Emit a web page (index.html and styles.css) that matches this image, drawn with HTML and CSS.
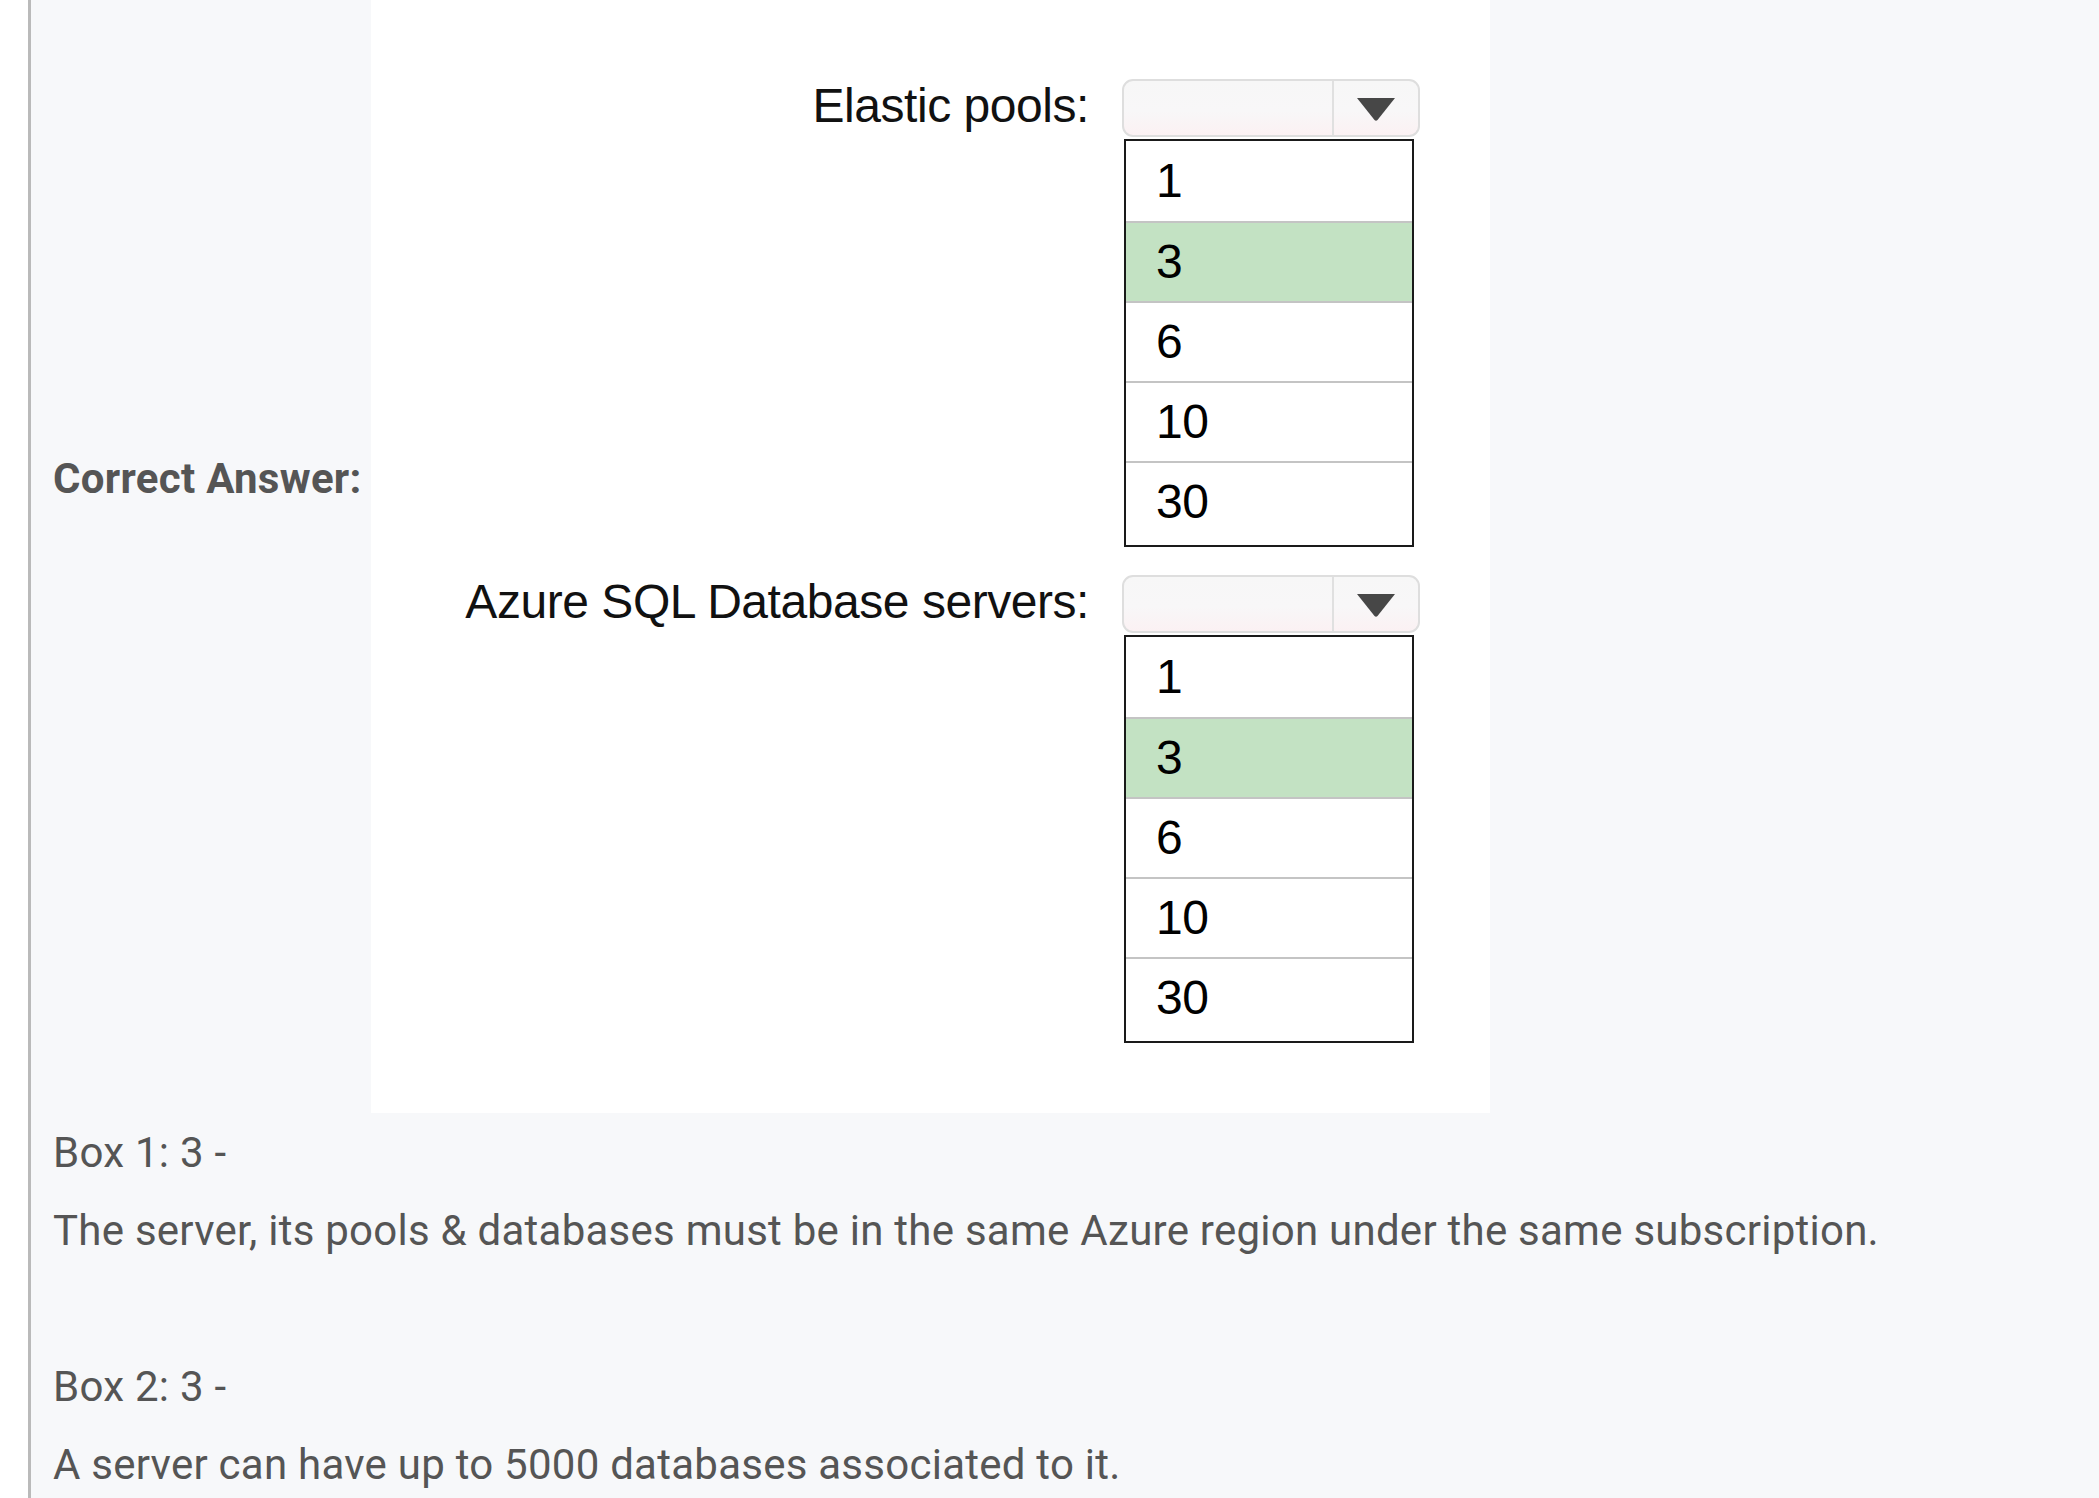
FILE: index.html
```html
<!DOCTYPE html>
<html lang="en">
<head>
<meta charset="utf-8">
<title>Correct Answer</title>
<link rel="stylesheet" href="styles.css">
</head>
<body>
<div class="page">
  <div class="answer-row">
    <div class="answer-label">Correct Answer:</div>
    <div class="panel">
      <div class="group">
        <div class="field-label">Elastic pools:</div>
        <div class="control">
          <div class="dropdown">
            <div class="dd-field"></div>
            <div class="dd-btn">
              <svg class="arrow" width="40" height="24" viewBox="0 0 40 24"><path d="M1 1 H39 L21.5 23 Q20 24.5 18.5 23 Z" fill="#474747"/></svg>
            </div>
          </div>
          <div class="list">
            <div class="opt">1</div>
            <div class="opt selected">3</div>
            <div class="opt">6</div>
            <div class="opt">10</div>
            <div class="opt">30</div>
          </div>
        </div>
      </div>
      <div class="group">
        <div class="field-label">Azure SQL Database servers:</div>
        <div class="control">
          <div class="dropdown">
            <div class="dd-field"></div>
            <div class="dd-btn">
              <svg class="arrow" width="40" height="24" viewBox="0 0 40 24"><path d="M1 1 H39 L21.5 23 Q20 24.5 18.5 23 Z" fill="#474747"/></svg>
            </div>
          </div>
          <div class="list">
            <div class="opt">1</div>
            <div class="opt selected">3</div>
            <div class="opt">6</div>
            <div class="opt">10</div>
            <div class="opt">30</div>
          </div>
        </div>
      </div>
    </div>
  </div>
  <div class="explanation">
    <p>Box 1: 3 -</p>
    <p>The server, its pools &amp; databases must be in the same Azure region under the same subscription.</p>
    <p class="blank">&nbsp;</p>
    <p>Box 2: 3 -</p>
    <p>A server can have up to 5000 databases associated to it.</p>
  </div>
</div>
</body>
</html>
```
FILE: styles.css
```css
html, body {
  margin: 0;
  padding: 0;
  background: #ffffff;
}

.page {
  margin-left: 28px;
  border-left: 3px solid #bababa;
  background: #f7f8fa;
  padding-left: 22px;
  min-height: 100vh;
  box-sizing: border-box;
  font-family: Roboto, "Liberation Sans", sans-serif;
  color: #555555;
  overflow: hidden;
}

.answer-row {
  display: flex;
  align-items: flex-start;
}

.answer-label {
  flex: none;
  width: 318px;
  margin-top: 440px;
  font-weight: 700;
  font-size: 42px;
  line-height: 78px;
  letter-spacing: 0.3px;
  white-space: nowrap;
}

.panel {
  flex: none;
  width: 1119px;
  background: #ffffff;
  padding: 79px 0 70px;
  display: flex;
  flex-direction: column;
  gap: 28px;
}

.group {
  display: flex;
  align-items: flex-start;
  gap: 33px;
}

.field-label {
  flex: none;
  width: 718px;
  text-align: right;
  font-family: "Liberation Sans", Arial, sans-serif;
  font-size: 48px;
  line-height: 53px;
  letter-spacing: -0.45px;
  color: #111111;
  white-space: nowrap;
}

.control {
  flex: none;
  width: 298px;
}

.dropdown {
  height: 58px;
  box-sizing: border-box;
  border: 2px solid #dedede;
  border-radius: 11px;
  background: linear-gradient(#f7f7f7 0%, #f8f7f8 55%, #fbf1f3 100%);
  display: flex;
}

.dd-field {
  width: 208px;
  flex: none;
}

.dd-btn {
  flex: 1;
  border-left: 2px solid #e0e0e0;
  display: flex;
  justify-content: center;
  align-items: flex-start;
  padding-top: 16px;
}

.arrow {
  display: block;
}

.list {
  margin: 2px 0 0 2px;
  width: 290px;
  height: 408px;
  box-sizing: border-box;
  border: 2px solid #1a1a1a;
  background: #ffffff;
  display: flex;
  flex-direction: column;
}

.opt {
  height: 78px;
  flex: none;
  border-bottom: 2px solid #c4c4c4;
  padding-left: 30px;
  font-family: "Liberation Sans", Arial, sans-serif;
  font-size: 48px;
  line-height: 78px;
  color: #000000;
  letter-spacing: -0.5px;
}

.opt:first-child {
  height: 80px;
  line-height: 80px;
}

.opt:last-child {
  border-bottom: none;
  flex: 1;
}

.opt.selected {
  background: #c3e2c3;
}

.explanation {
  padding-top: 1px;
  font-size: 42px;
  line-height: 78px;
  letter-spacing: 0.25px;
}

.explanation p {
  margin: 0;
  white-space: nowrap;
}
```
